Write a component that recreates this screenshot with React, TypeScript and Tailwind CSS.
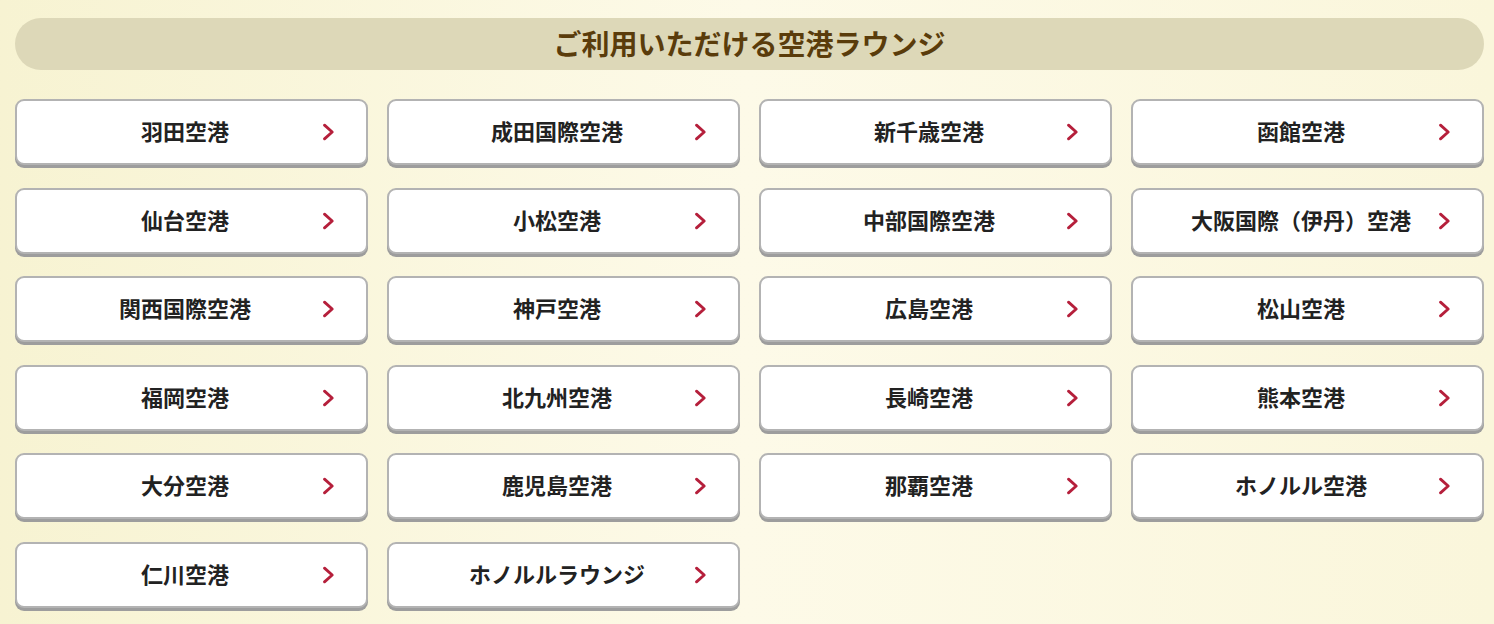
const airports = [
  '羽田空港',
  '成田国際空港',
  '新千歳空港',
  '函館空港',
  '仙台空港',
  '小松空港',
  '中部国際空港',
  '大阪国際（伊丹）空港',
  '関西国際空港',
  '神戸空港',
  '広島空港',
  '松山空港',
  '福岡空港',
  '北九州空港',
  '長崎空港',
  '熊本空港',
  '大分空港',
  '鹿児島空港',
  '那覇空港',
  'ホノルル空港',
  '仁川空港',
  'ホノルルラウンジ',
]

function Chevron() {
  return (
    <svg className="h-[18px] w-[13px] shrink-0" viewBox="0 0 13 18" fill="none">
      <path
        d="M2.5 2.2L10.2 9L2.5 15.8"
        stroke="#b51f3b"
        strokeWidth="2.9"
        strokeLinecap="round"
        strokeLinejoin="round"
      />
    </svg>
  )
}

export default function App() {
  return (
    <div
      className="h-[624px] overflow-hidden bg-linear-to-r from-[#f7f3d2] via-[#fdfae8] to-[#faf6db] pl-[15px] pr-[10px] pt-[18px]"
      style={{ fontFamily: '"Noto Sans CJK JP", "Noto Sans", sans-serif' }}
    >
      <h2 className="flex h-[52px] items-center justify-center rounded-full bg-[#ddd8b8] pb-[2px] text-[28px] font-bold text-[#5a3c0b]">
        ご利用いただける空港ラウンジ
      </h2>

      <div className="mt-[29px] grid grid-cols-4 gap-x-[19px] gap-y-[22.6px]">
        {airports.map((name) => (
          <a
            key={name}
            href="#"
            className="flex h-[66px] items-center rounded-[9px] border-2 border-[#b3b3b3] bg-white pl-[31px] pr-[31px] shadow-[0_3px_0_#9d9d9d]"
          >
            <span className="flex-1 pb-[4px] text-center text-[22px] font-bold leading-none text-[#222]">
              {name}
            </span>
            <Chevron />
          </a>
        ))}
      </div>
    </div>
  )
}
